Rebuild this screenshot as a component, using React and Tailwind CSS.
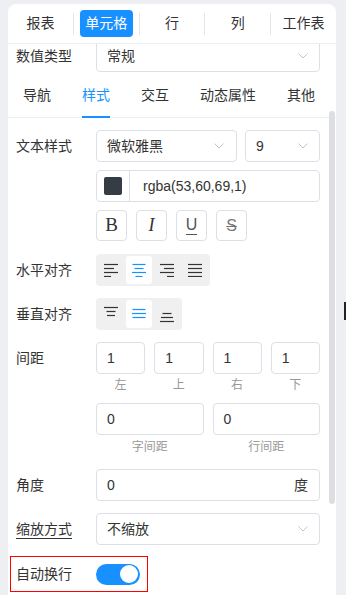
import React from "react";

const Chevron = () => (
  <svg width="10" height="6" viewBox="0 0 10 6" className="shrink-0">
    <polyline points="0.5,0.5 5,5 9.5,0.5" fill="none" stroke="#c0c4cc" strokeWidth="1" />
  </svg>
);

const Select = ({ value, className = "" }) => (
  <div
    className={`h-[32px] border border-[#dcdfe6] rounded-[4px] flex items-center justify-between pl-[10px] pr-[11px] text-[14px] text-[#333] bg-white ${className}`}
  >
    <span>{value}</span>
    <Chevron />
  </div>
);

const Input = ({ value, className = "" }) => (
  <div
    className={`h-[32px] border border-[#dcdfe6] rounded-[4px] flex items-center pl-[10px] text-[14px] text-[#333] ${className}`}
  >
    {value}
  </div>
);

const Row = ({ label, children, className = "", labelClass = "" }) => (
  <div className={`flex ${className}`}>
    <div className="w-[80px] h-[32px] shrink-0 flex items-center text-[14px] text-[#333]">
      <span className={labelClass}>{label}</span>
    </div>
    <div className="flex-1 min-w-0">{children}</div>
  </div>
);

// horizontal align icons: [x1, x2] for 4 lines
const hLines = {
  left: [[0, 14], [0, 10], [0, 14], [0, 7]],
  center: [[0.5, 13.5], [2.5, 11.5], [0, 14], [3.5, 10.5]],
  right: [[0, 14], [4, 14], [0, 14], [7, 14]],
  justify: [[0, 14], [0, 14], [0, 14], [0, 14]],
};

const HIcon = ({ type, color }) => (
  <svg width="14" height="14" viewBox="0 0 14 14">
    {hLines[type].map(([a, b], i) => (
      <line key={i} x1={a} x2={b} y1={1.5 + i * 4} y2={1.5 + i * 4} stroke={color} strokeWidth="1.2" />
    ))}
  </svg>
);

// vertical align icons: [x1, x2, y]
const vLines = {
  top: [[0, 14, 7.5], [2.5, 11.5, 11.5], [3, 11, 15.5]],
  middle: [[0.5, 13.5, 9.5], [0, 14, 13.5], [0.5, 13.5, 17.5]],
  bottom: [[2.5, 11.5, 13.5], [1, 13, 17.5], [0, 14, 21.5]],
};

const VIcon = ({ type, color }) => (
  <svg width="14" height="28" viewBox="0 0 14 28">
    {vLines[type].map(([a, b, y], i) => (
      <line key={i} x1={a} x2={b} y1={y} y2={y} stroke={color} strokeWidth="1.2" />
    ))}
  </svg>
);

const tabs = ["报表", "单元格", "行", "列", "工作表"];
const subTabs = ["导航", "样式", "交互", "动态属性", "其他"];

export default function App() {
  return (
    <div className="relative h-[595px] overflow-hidden bg-[#edeff3] [font-family:'Liberation_Sans','Noto_Sans_CJK_SC',sans-serif]">
      <div className="relative ml-[8px] mt-[4px] w-[328px] h-[591px] bg-white rounded-t-[8px] overflow-hidden">
        {/* top tabs */}
        <div className="h-[40px] border-b border-[#ebeef5] flex items-center">
          {tabs.map((t, i) => (
            <React.Fragment key={t}>
              {i > 0 && <div className="w-px h-[22px] bg-[#e6e6e6]" />}
              <div className="flex-1 h-full flex items-center justify-center">
                {i === 1 ? (
                  <div className="w-[53px] h-[27px] rounded-[4px] bg-[#1890ff] text-white text-[14px] flex items-center justify-center">
                    {t}
                  </div>
                ) : (
                  <span className="text-[14px] text-[#333]">{t}</span>
                )}
              </div>
            </React.Fragment>
          ))}
        </div>

        {/* 数值类型 (partly scrolled) */}
        <div className="h-[28px] overflow-hidden pl-[8px] pr-[16px]">
          <Row label="数值类型" className="-mt-[4px]">
            <Select value="常规" />
          </Row>
        </div>

        {/* sub tabs */}
        <div className="h-[46px] pt-[2px] border-b border-[#ebeef5] flex pl-[15px] gap-[31px]">
          {subTabs.map((t, i) => (
            <div
              key={t}
              className={`relative h-full flex items-center text-[14px] ${i === 1 ? "text-[#1890ff]" : "text-[#333]"}`}
            >
              {t}
              {i === 1 && <div className="absolute left-0 right-0 -bottom-[1px] h-[2px] bg-[#1890ff]" />}
            </div>
          ))}
        </div>

        {/* content */}
        <div className="pl-[8px] pr-[16px] pt-[12px]">
          <Row label="文本样式">
            <div className="flex flex-col gap-[8px]">
              <div className="flex gap-[8px]">
                <Select value="微软雅黑" className="w-[141px] pr-[12px]" />
                <Select value="9" className="flex-1" />
              </div>
              <div className="h-[32px] border border-[#dcdfe6] rounded-[4px] flex items-center">
                <div className="w-[33px] h-full border-r border-[#dcdfe6] flex items-center justify-center">
                  <div className="w-[18px] h-[18px] rounded-[2px] bg-[#353c45]" />
                </div>
                <span className="pl-[13px] text-[14px] text-[#333]">rgba(53,60,69,1)</span>
              </div>
              <div className="flex gap-[9px]">
                <div className="w-[31px] h-[31px] border border-[#dcdfe6] rounded-[4px] flex items-center justify-center text-[19px] text-[#333] [font-family:'Liberation_Serif',serif]">
                  B
                </div>
                <div className="w-[31px] h-[31px] border border-[#dcdfe6] rounded-[4px] flex items-center justify-center text-[18px] italic text-[#333] [font-family:'Liberation_Serif',serif]">
                  I
                </div>
                <div className="w-[31px] h-[31px] border border-[#dcdfe6] rounded-[4px] flex flex-col items-center justify-center">
                  <span className="text-[16px] leading-[15px] text-[#555] font-light">U</span>
                  <div className="w-[11px] h-px bg-[#555] mt-[2px]" />
                </div>
                <div className="w-[31px] h-[31px] border border-[#dcdfe6] rounded-[4px] flex items-center justify-center text-[16px] text-[#777] line-through font-light">
                  S
                </div>
              </div>
            </div>
          </Row>

          <Row label="水平对齐" className="mt-[13px]">
            <div className="flex w-fit gap-[2px] p-[2px] h-[32px] rounded-[4px] bg-[#f0f0f0]">
              {["left", "center", "right", "justify"].map((k, i) => (
                <div
                  key={k}
                  className={`w-[26px] h-[28px] rounded-[3px] flex items-center justify-center ${i === 1 ? "bg-white" : ""}`}
                >
                  <HIcon type={k} color={i === 1 ? "#1890ff" : "#333"} />
                </div>
              ))}
            </div>
          </Row>

          <Row label="垂直对齐" className="mt-[12px]">
            <div className="flex w-fit gap-[2px] p-[2px] h-[32px] rounded-[4px] bg-[#f0f0f0]">
              {["top", "middle", "bottom"].map((k, i) => (
                <div
                  key={k}
                  className={`w-[26px] h-[28px] rounded-[3px] flex items-center justify-center ${i === 1 ? "bg-white" : ""}`}
                >
                  <VIcon type={k} color={i === 1 ? "#1890ff" : "#333"} />
                </div>
              ))}
            </div>
          </Row>

          <Row label="间距" className="mt-[12px]">
            <div className="grid grid-cols-4 gap-x-[9px]">
              {["左", "上", "右", "下"].map((l) => (
                <div key={l} className="flex flex-col">
                  <Input value="1" />
                  <div className="h-[22px] flex items-center justify-center text-[12px] text-[#999]">{l}</div>
                </div>
              ))}
            </div>
            <div className="mt-[7px] grid grid-cols-2 gap-x-[9px]">
              {["字间距", "行间距"].map((l) => (
                <div key={l} className="flex flex-col">
                  <Input value="0" />
                  <div className="h-[24px] flex items-center justify-center text-[12px] text-[#999]">{l}</div>
                </div>
              ))}
            </div>
          </Row>

          <Row label="角度" className="mt-[10px]">
            <div className="h-[32px] border border-[#dcdfe6] rounded-[4px] flex items-center justify-between pl-[10px] pr-[11px] text-[14px] text-[#333]">
              <span>0</span>
              <span>度</span>
            </div>
          </Row>

          <Row label="缩放方式" className="mt-[12px]" labelClass="underline underline-offset-[4px]">
            <Select value="不缩放" />
          </Row>

          <div className="mt-[11px] -ml-[6px] w-[138px] h-[36px] border border-[#ff0000] flex items-center pl-[5px]">
            <div className="w-[80px] text-[14px] text-[#333]">自动换行</div>
            <div className="w-[44px] h-[21px] rounded-full bg-[#1890ff] flex items-center justify-end p-[2px]">
              <div className="w-[18px] h-[18px] rounded-full bg-white" />
            </div>
          </div>
        </div>

        {/* scrollbar thumb */}
        <div className="absolute top-[107px] right-[1px] w-[6px] h-[393px] rounded-full bg-[#dcdee2]" />
      </div>

      {/* cursor mark */}
      <div className="absolute left-[344px] top-[302px] w-[2px] h-[18px] bg-[#222]" />
    </div>
  );
}
